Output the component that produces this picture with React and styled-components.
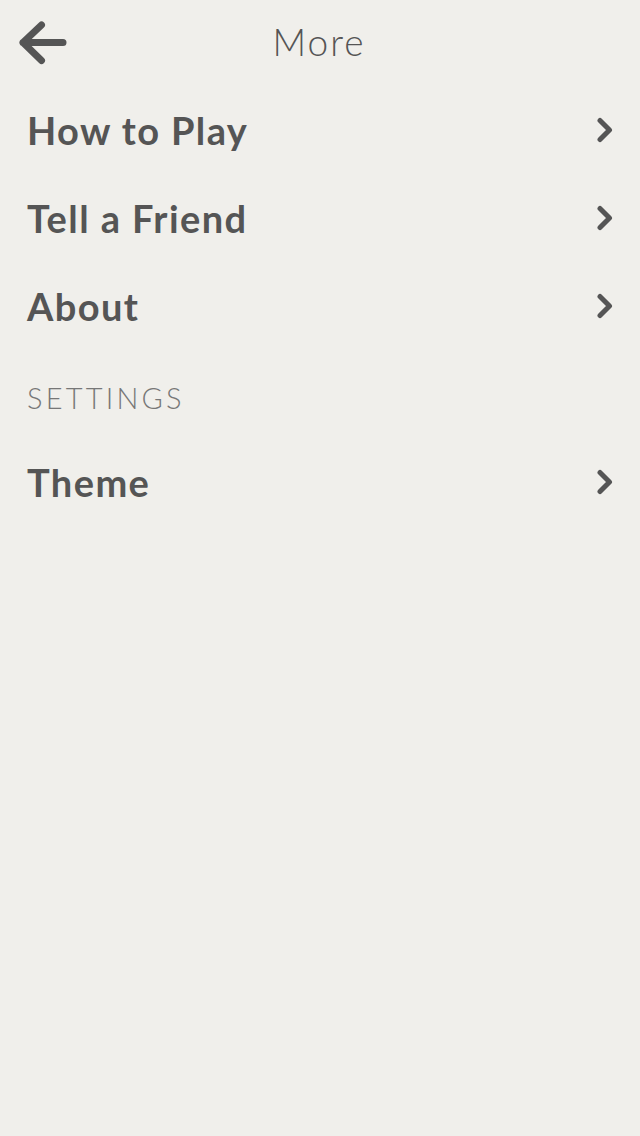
import React from 'react';
import styled, { createGlobalStyle } from 'styled-components';

const GlobalStyle = createGlobalStyle`
  html, body {
    margin: 0;
    padding: 0;
    background: #f0efeb;
  }
  body {
    font-family: Lato, "Open Sans", sans-serif;
    color: #555555;
  }
`;

const BackIcon = () => (
  <svg width="48" height="44" viewBox="0 0 48 44" fill="none">
    <path
      d="M44 21.5H4M22.5 4L4 21.5L22.5 39.5"
      stroke="#555555"
      strokeWidth="7"
      strokeLinecap="round"
      strokeLinejoin="round"
    />
  </svg>
);

const ChevronIcon = () => (
  <svg width="18" height="26" viewBox="0 0 18 26" fill="none">
    <path
      d="M4 3.5L13.5 13L4 22.5"
      stroke="#555555"
      strokeWidth="5"
      strokeLinecap="round"
      strokeLinejoin="round"
    />
  </svg>
);

const items = ['How to Play', 'Tell a Friend', 'About'];

const App = () => {
  return (
    <>
      <GlobalStyle />
      <Screen>
        <Header>
          <BackButton aria-label="Back">
            <BackIcon />
          </BackButton>
          <Title>More</Title>
        </Header>

        <List>
          {items.map((label) => (
            <Row key={label}>
              <Label>{label}</Label>
              <ChevronIcon />
            </Row>
          ))}
        </List>

        <SectionTitle>Settings</SectionTitle>

        <List>
          <Row>
            <Label>Theme</Label>
            <ChevronIcon />
          </Row>
        </List>
      </Screen>
    </>
  );
};

const Screen = styled.div`
  min-height: 1136px;
  background: #f0efeb;
`;

const Header = styled.header`
  position: relative;
  height: 86px;
  display: flex;
  align-items: center;
  justify-content: center;
`;

const BackButton = styled.button`
  position: absolute;
  left: 19px;
  top: 21px;
  padding: 0;
  border: none;
  background: none;
  display: flex;
`;

const Title = styled.h1`
  margin: -4px 0 0 -2px;
  font-weight: 300;
  font-size: 37px;
  color: #555555;
  letter-spacing: 2px;
`;

const List = styled.ul`
  list-style: none;
  margin: 0;
  padding: 0;
`;

const Row = styled.li`
  height: 88px;
  display: flex;
  align-items: center;
  justify-content: space-between;
  padding: 0 26px 0 27px;
`;

const Label = styled.span`
  font-weight: 700;
  font-size: 38px;
  letter-spacing: 1.4px;
  color: #555555;
`;

const SectionTitle = styled.h2`
  box-sizing: border-box;
  margin: 0;
  height: 88px;
  padding: 6px 27px 0;
  display: flex;
  align-items: center;
  font-weight: 300;
  font-size: 29px;
  letter-spacing: 3.2px;
  text-transform: uppercase;
  color: #777777;
`;

export default App;
